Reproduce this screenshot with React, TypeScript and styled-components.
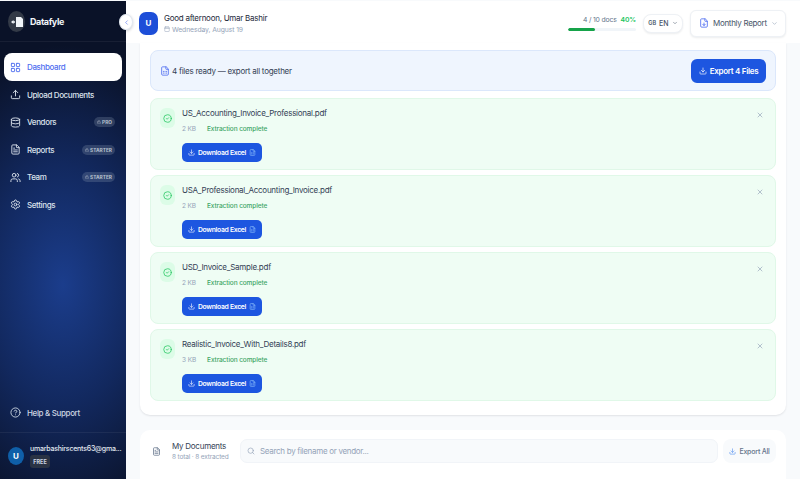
import React from "react";
import styled, { createGlobalStyle } from "styled-components";
import {
  LayoutGrid,
  Upload,
  Database,
  FileText,
  Users,
  Settings,
  CircleHelp,
  Lock,
  ChevronLeft,
  ChevronDown,
  Calendar,
  Download,
  CircleCheck,
  X,
  Search,
  FileSpreadsheet,
  FileDown,
} from "lucide-react";

const GlobalStyle = createGlobalStyle`
  html, body {
    margin: 0;
    padding: 0;
    height: 479px;
    overflow: hidden;
    background: #f8fafc;
    font-family: Inter, "Liberation Sans", sans-serif;
  }
  * { box-sizing: border-box; }
`;

const Page = styled.div`
  display: flex;
  width: 800px;
  height: 479px;
  overflow: hidden;
  position: relative;
`;

const Sidebar = styled.aside`
  width: 126px;
  flex: none;
  margin-top: 1px;
  display: flex;
  flex-direction: column;
  color: #e2e8f0;
  background:
    radial-gradient(ellipse 150px 240px at 50% 284px, #1b3d8c 0%, rgba(20, 46, 108, 0.8) 50%, rgba(11, 21, 49, 0) 100%),
    #0a1228;
`;

const Brand = styled.div`
  height: 41px;
  flex: none;
  display: flex;
  align-items: center;
  gap: 5px;
  padding: 1px 8px 0;
  border-bottom: 1px solid rgba(255, 255, 255, 0.06);
`;

const BrandMark = styled.div`
  width: 17px;
  height: 21px;
  border-radius: 50%;
  background: #333a47;
  display: flex;
  align-items: center;
  justify-content: center;
`;

const BrandName = styled.span`
  font-size: 9px;
  font-weight: 700;
  letter-spacing: -0.4px;
  color: #f1f5f9;
`;

const Collapse = styled.button`
  position: absolute;
  left: 119px;
  top: 14px;
  width: 14px;
  height: 16px;
  padding: 0;
  border: 1px solid #e2e8f0;
  border-radius: 50%;
  background: #fff;
  color: #4f6ef0;
  display: flex;
  align-items: center;
  justify-content: center;
  box-shadow: 0 1px 3px rgba(15, 23, 42, 0.2);
`;

const Nav = styled.nav`
  display: flex;
  flex-direction: column;
  padding: 11px 4px 0;
  flex: 1;
`;

const NavItem = styled.div<{ $active?: boolean }>`
  height: 27.5px;
  flex: none;
  display: flex;
  align-items: center;
  gap: 6px;
  padding: 1px 7px 0 6px;
  border-radius: 8px;
  font-size: 8px;
  font-weight: 500;
  letter-spacing: -0.38px;
  background: ${(p) => (p.$active ? "#fff" : "transparent")};
  color: ${(p) => (p.$active ? "#4f6ef0" : "#dbe2ec")};
`;

const NavLabel = styled.span`
  flex: 1;
  white-space: nowrap;
`;

const Badge = styled.span`
  display: inline-flex;
  align-items: center;
  gap: 1px;
  height: 10px;
  padding: 0 3px;
  border-radius: 5px;
  background: rgba(148, 163, 184, 0.25);
  color: #b6c0ce;
  font-size: 4.8px;
  font-weight: 700;
  letter-spacing: 0;
`;

const Help = styled.div`
  height: 42px;
  flex: none;
  display: flex;
  align-items: center;
  gap: 6px;
  padding: 2px 10px 0;
  font-size: 8px;
  font-weight: 500;
  letter-spacing: -0.35px;
  color: #cbd5e1;
  border-bottom: 1px solid rgba(255, 255, 255, 0.06);
`;

const Account = styled.div`
  height: 46px;
  flex: none;
  display: flex;
  align-items: center;
  gap: 6px;
  padding: 0 8px;
`;

const AccountAvatar = styled.div`
  width: 16px;
  height: 18px;
  flex: none;
  border-radius: 50%;
  background: #0f5fa8;
  color: #fff;
  font-size: 8px;
  font-weight: 700;
  display: flex;
  align-items: center;
  justify-content: center;
`;

const AccountInfo = styled.div`
  min-width: 0;
  display: flex;
  flex-direction: column;
  align-items: flex-start;
  gap: 2px;
`;

const Email = styled.div`
  font-size: 7px;
  font-weight: 500;
  letter-spacing: -0.22px;
  color: #e2e8f0;
  white-space: nowrap;
`;

const Plan = styled.span`
  width: 20px;
  height: 13px;
  border-radius: 3px;
  background: #2a3344;
  color: #cbd5e1;
  font-size: 5.5px;
  font-weight: 700;
  display: flex;
  align-items: center;
  justify-content: center;
`;

const Main = styled.main`
  flex: 1;
  min-width: 0;
  display: flex;
  flex-direction: column;
`;

const Header = styled.header`
  height: 42px;
  flex: none;
  margin-top: 1px;
  display: flex;
  align-items: center;
  padding: 2px 14px 0 13px;
  background: #fff;
`;

const UserAvatar = styled.div`
  width: 19px;
  height: 23px;
  border-radius: 7px;
  background: #1d4ed8;
  color: #fff;
  font-size: 8px;
  font-weight: 700;
  display: flex;
  align-items: center;
  justify-content: center;
  margin-right: 6px;
`;

const Greeting = styled.div`
  flex: 1;
  display: flex;
  flex-direction: column;
  gap: 2px;
`;

const Hello = styled.div`
  font-size: 8px;
  letter-spacing: -0.26px;
  color: #1e293b;
`;

const DateLine = styled.div`
  display: flex;
  align-items: center;
  gap: 2px;
  font-size: 6.8px;
  letter-spacing: -0.1px;
  color: #94a3b8;
`;

const Usage = styled.div`
  width: 68px;
  margin-right: 7px;
  display: flex;
  flex-direction: column;
  align-items: flex-end;
  gap: 4px;
`;

const UsageText = styled.div`
  font-size: 6.8px;
  letter-spacing: -0.15px;
  color: #64748b;
`;

const UsagePct = styled.span`
  margin-left: 4px;
  color: #22c55e;
  font-weight: 600;
`;

const Track = styled.div`
  width: 68px;
  height: 3px;
  border-radius: 2px;
  background: #f1f5f9;
  overflow: hidden;
`;

const Fill = styled.div`
  height: 100%;
  background: #16a34a;
  border-radius: 2px;
`;

const Lang = styled.div`
  width: 40px;
  height: 19px;
  margin-right: 7px;
  border: 1px solid #eef1f5;
  border-radius: 8px;
  background: #fff;
  box-shadow: 0 1px 2px rgba(15, 23, 42, 0.08);
  display: flex;
  align-items: center;
  justify-content: center;
  gap: 3px;
  font-size: 7px;
  font-weight: 500;
  color: #475569;
`;

const LangCode = styled.span`
  font-size: 5.5px;
  font-weight: 600;
`;

const ReportButton = styled.div`
  width: 96px;
  height: 27px;
  flex: none;
  border: 1px solid #eef1f5;
  border-radius: 6px;
  background: #fff;
  box-shadow: 0 1px 2px rgba(15, 23, 42, 0.08);
  display: flex;
  align-items: center;
  gap: 4px;
  padding: 0 7px 0 8px;
  font-size: 8px;
  letter-spacing: -0.3px;
  white-space: nowrap;
  color: #475569;
`;

const ReportLabel = styled.span`
  flex: 1;
`;

const Content = styled.div`
  flex: 1;
  min-height: 0;
  padding: 0 14px 0 14px;
  display: flex;
  flex-direction: column;
  gap: 15px;
`;

const ResultsCard = styled.section`
  height: 372px;
  flex: none;
  padding: 7px 10px 0;
  border-radius: 0 0 10px 10px;
  background: #fff;
  box-shadow: 0 1px 2px rgba(15, 23, 42, 0.1);
  display: flex;
  flex-direction: column;
  gap: 5px;
`;

const ExportBanner = styled.div`
  height: 41px;
  flex: none;
  margin-bottom: 2px;
  padding: 0 9px;
  border: 1px solid #dbe7fb;
  border-radius: 8px;
  background: #eff5fe;
  display: flex;
  align-items: center;
  gap: 2px;
  font-size: 8px;
  letter-spacing: -0.25px;
  color: #334155;
`;

const BannerText = styled.span`
  flex: 1;
`;

const ExportButton = styled.button`
  width: 75px;
  height: 24px;
  flex: none;
  padding: 0;
  border: 0;
  border-radius: 6px;
  background: #1d56e0;
  color: #fff;
  font-family: inherit;
  font-size: 8px;
  font-weight: 600;
  letter-spacing: -0.3px;
  white-space: nowrap;
  display: flex;
  align-items: center;
  justify-content: center;
  gap: 3px;
`;

const FileCard = styled.article`
  height: 72px;
  flex: none;
  position: relative;
  display: flex;
  gap: 7px;
  padding: 8px 9px;
  border: 1px solid #e0f8e8;
  border-radius: 8px;
  background: #effdf4;
`;

const FileIcon = styled.div`
  width: 15px;
  height: 20px;
  flex: none;
  margin-top: 1px;
  border-radius: 6px;
  background: #dcfce7;
  color: #22c55e;
  display: flex;
  align-items: center;
  justify-content: center;
`;

const FileBody = styled.div`
  flex: 1;
  min-width: 0;
`;

const FileName = styled.div`
  font-size: 8px;
  line-height: 12px;
  letter-spacing: -0.25px;
  color: #334155;
`;

const FileMeta = styled.div`
  margin-top: 6px;
  display: flex;
  gap: 11px;
  font-size: 6.5px;
  line-height: 9px;
  letter-spacing: -0.1px;
  color: #94a3b8;
`;

const FileStatus = styled.span`
  color: #3fa566;
  font-weight: 500;
`;

const DownloadButton = styled.button`
  margin-top: 9px;
  width: 80px;
  height: 19px;
  padding: 0;
  border: 0;
  border-radius: 5px;
  background: #1d56e0;
  color: #fff;
  font-family: inherit;
  font-size: 6.8px;
  font-weight: 600;
  letter-spacing: -0.3px;
  white-space: nowrap;
  display: flex;
  align-items: center;
  justify-content: center;
  gap: 3px;
`;

const Dismiss = styled.span`
  position: absolute;
  top: 12px;
  right: 11px;
  color: #94a3b8;
  display: flex;
`;

const DocsCard = styled.section`
  flex: 1;
  min-height: 0;
  padding: 9px 10px 0 10px;
  border-radius: 10px 10px 0 0;
  background: #fff;
  display: flex;
  align-items: flex-start;
`;

const DocsIcon = styled.div`
  width: 12px;
  height: 24px;
  margin-right: 10px;
  color: #64748b;
  display: flex;
  align-items: center;
  justify-content: center;
`;

const DocsTitle = styled.div`
  width: 68px;
  flex: none;
  padding-top: 2px;
  display: flex;
  flex-direction: column;
  gap: 2px;
`;

const DocsName = styled.div`
  font-size: 8px;
  letter-spacing: -0.25px;
  color: #334155;
`;

const DocsMeta = styled.div`
  font-size: 6.5px;
  letter-spacing: -0.15px;
  color: #94a3b8;
  white-space: nowrap;
`;

const SearchBox = styled.div`
  flex: 1;
  height: 24px;
  margin-right: 5px;
  padding: 0 6px;
  border: 1px solid #f1f4f8;
  border-radius: 7px;
  background: #f8fafc;
  display: flex;
  align-items: center;
  gap: 5px;
  font-size: 8px;
  letter-spacing: -0.3px;
  color: #94a3b8;
`;

const ExportAll = styled.div`
  width: 53px;
  height: 24px;
  flex: none;
  border-radius: 8px;
  background: #f8fafc;
  display: flex;
  align-items: center;
  justify-content: center;
  gap: 3px;
  font-size: 7px;
  font-weight: 500;
  letter-spacing: -0.2px;
  color: #64748b;
`;

const navItems = [
  { label: "Upload Documents", icon: Upload },
  { label: "Vendors", icon: Database, badge: "PRO" },
  { label: "Reports", icon: FileText, badge: "STARTER" },
  { label: "Team", icon: Users, badge: "STARTER" },
  { label: "Settings", icon: Settings },
];

const files = [
  { name: "US_Accounting_Invoice_Professional.pdf", size: "2 KB" },
  { name: "USA_Professional_Accounting_Invoice.pdf", size: "2 KB" },
  { name: "USD_Invoice_Sample.pdf", size: "2 KB" },
  { name: "Realistic_Invoice_With_Details8.pdf", size: "3 KB" },
];

const App = () => {
  return (
    <Page>
      <GlobalStyle />
      <Sidebar>
        <Brand>
          <BrandMark>
            <svg width="12" height="10" viewBox="0 0 12 10">
              <path d="M5 0h5l2 2v8H5z" fill="#f1f5f9" />
              <path d="M0 5l2.5-2v1.2H4v1.6H2.5V7z" fill="#f1f5f9" />
            </svg>
          </BrandMark>
          <BrandName>Datafyle</BrandName>
        </Brand>
        <Nav>
          <NavItem $active>
            <LayoutGrid size={11} />
            <NavLabel>Dashboard</NavLabel>
          </NavItem>
          {navItems.map((item) => (
            <NavItem key={item.label}>
              <item.icon size={11} />
              <NavLabel>{item.label}</NavLabel>
              {item.badge && (
                <Badge>
                  <Lock size={4} />
                  {item.badge}
                </Badge>
              )}
            </NavItem>
          ))}
        </Nav>
        <Help>
          <CircleHelp size={11} />
          Help &amp; Support
        </Help>
        <Account>
          <AccountAvatar>U</AccountAvatar>
          <AccountInfo>
            <Email>umarbashirscents63@gma...</Email>
            <Plan>FREE</Plan>
          </AccountInfo>
        </Account>
      </Sidebar>
      <Collapse>
        <ChevronLeft size={7} />
      </Collapse>
      <Main>
        <Header>
          <UserAvatar>U</UserAvatar>
          <Greeting>
            <Hello>Good afternoon, Umar Bashir</Hello>
            <DateLine>
              <Calendar size={6} />
              Wednesday, August 19
            </DateLine>
          </Greeting>
          <Usage>
            <UsageText>
              4 / 10 docs<UsagePct>40%</UsagePct>
            </UsageText>
            <Track>
              <Fill style={{ width: `${(4 / 10) * 100}%` }} />
            </Track>
          </Usage>
          <Lang>
            <LangCode>GB</LangCode>
            EN
            <ChevronDown size={6} />
          </Lang>
          <ReportButton>
            <FileDown size={10} color="#4f6ef0" />
            <ReportLabel>Monthly Report</ReportLabel>
            <ChevronDown size={7} color="#94a3b8" />
          </ReportButton>
        </Header>
        <Content>
          <ResultsCard>
            <ExportBanner>
              <FileSpreadsheet size={10} color="#4f6ef0" />
              <BannerText>4 files ready — export all together</BannerText>
              <ExportButton>
                <Download size={8} />
                Export 4 Files
              </ExportButton>
            </ExportBanner>
            {files.map((file) => (
              <FileCard key={file.name}>
                <FileIcon>
                  <CircleCheck size={9} />
                </FileIcon>
                <FileBody>
                  <FileName>{file.name}</FileName>
                  <FileMeta>
                    {file.size}
                    <FileStatus>Extraction complete</FileStatus>
                  </FileMeta>
                  <DownloadButton>
                    <Download size={7} />
                    Download Excel
                    <FileSpreadsheet size={7} color="#93c5fd" />
                  </DownloadButton>
                </FileBody>
                <Dismiss>
                  <X size={8} />
                </Dismiss>
              </FileCard>
            ))}
          </ResultsCard>
          <DocsCard>
            <DocsIcon>
              <FileText size={9} />
            </DocsIcon>
            <DocsTitle>
              <DocsName>My Documents</DocsName>
              <DocsMeta>8 total · 8 extracted</DocsMeta>
            </DocsTitle>
            <SearchBox>
              <Search size={8} />
              Search by filename or vendor...
            </SearchBox>
            <ExportAll>
              <Download size={7} color="#4f8ef0" />
              Export All
            </ExportAll>
          </DocsCard>
        </Content>
      </Main>
    </Page>
  );
};

export default App;
